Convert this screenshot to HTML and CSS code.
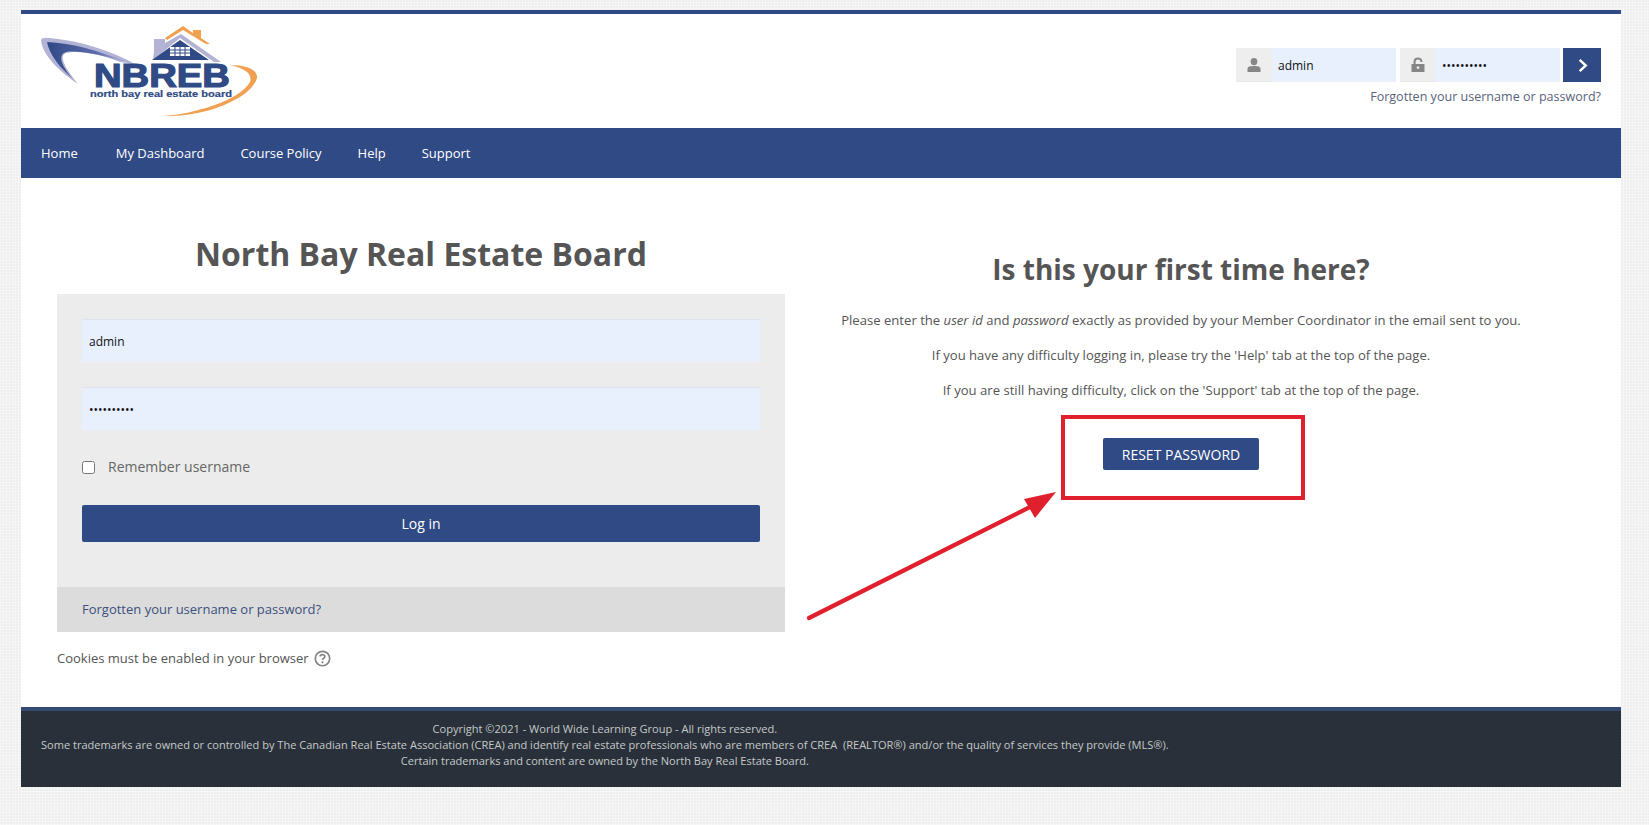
FILE: index.html
```html
<!DOCTYPE html>
<html lang="en">
  <head>
    <meta charset="UTF-8" />
    <meta name="viewport" content="width=device-width, initial-scale=1.0" />
    <title>North Bay Real Estate Board</title>
    <link rel="stylesheet" href="styles.css">
  </head>
  <body>
    <div class="page">
      <header class="site-header">
        <svg class="logo" viewBox="38 24 230 100" role="img" aria-label="NBREB logo">
          <defs>
            <linearGradient id="swoosh" x1="0" y1="0" x2="1" y2="0">
              <stop offset="0" stop-color="#2f4a87" />
              <stop offset="0.6" stop-color="#5a6aa8" />
              <stop offset="1" stop-color="#a9abd4" />
            </linearGradient>
          </defs>
          <path class="logo-lav" d="M41 40 Q42 37 50 38 C80 41 110 50 135 64 L120 62 C100 53 76 50 66 53 C58 56 66 69 78 84 C60 72 42 55 41 40Z" />
          <path fill="url(#swoosh)" d="M47 42 C72 43 100 51 126 62 C102 55 78 50 66 52 C57 55 62 66 72 78 C60 68 49 54 47 42Z" />
          <path class="logo-orange" d="M163 116 C195 114 240 100 250 82 C253 73 243 68 230 65 C247 65 258 70 257 78 C252 98 205 118 163 116Z" />
          <path class="logo-orange" d="M165 38 L183 26 L193 33 L193 30 L201 30 L201 38 L210 44 L206 44 L183 30 L167 40Z" />
          <path class="logo-lav" d="M154 52 L154 39 L165 39 L165 43 L181 34 L221 62 L214 62 L180 38 L153 60Z" />
          <path class="logo-navy" d="M180 40 L209 60 L152 60Z" />
          <path class="logo-window" d="M170 47 H190 V56 H170Z" />
          <path class="logo-grid" d="M175 47 V56 M180 47 V56 M185 47 V56 M170 50 H190 M170 53 H190" />
          <text class="logo-title" x="94" y="87" textLength="136" lengthAdjust="spacingAndGlyphs">NBREB</text>
          <text class="logo-sub" x="90" y="97" textLength="142" lengthAdjust="spacingAndGlyphs">north bay real estate board</text>
        </svg>
        <div class="top-login">
          <div class="top-fields">
            <div class="top-field">
              <span class="addon">
                <svg class="addon-icon" viewBox="0 0 16 16"><ellipse cx="8" cy="4.6" rx="3.4" ry="3.6" /><path d="M1.5 15 V12.2 C1.5 9.6 4 9 8 9 C12 9 14.5 9.6 14.5 12.2 V15Z" /></svg>
              </span>
              <input class="top-input" type="text" value="admin" aria-label="Username" />
            </div>
            <div class="top-field">
              <span class="addon">
                <svg class="addon-icon" viewBox="0 0 16 16">
                  <path class="lock-shackle" d="M4.6 7 V4.6 C4.6 0.6 11.4 0.6 11.4 4.6 V5" />
                  <path fill-rule="evenodd" d="M1.5 7 H14.5 V15 H1.5Z M8 9.2 a1.4 1.4 0 1 0 0.01 0Z" />
                </svg>
              </span>
              <input class="top-input top-pass" type="password" value="adminadmin" aria-label="Password" />
            </div>
            <button class="top-go" aria-label="Log in">
              <svg viewBox="0 0 16 16" class="go-icon"><path d="M5 2 L11.5 8 L5 14" /></svg>
            </button>
          </div>
          <a class="top-forgot" href="#">Forgotten your username or password?</a>
        </div>
      </header>

      <nav class="main-nav">
        <a href="#">Home</a>
        <a href="#">My Dashboard</a>
        <a href="#">Course Policy</a>
        <a href="#">Help</a>
        <a href="#">Support</a>
      </nav>

      <main class="content">
        <section class="login-col">
          <h1>North Bay Real Estate Board</h1>
          <div class="login-box">
            <form class="login-form">
              <input class="login-input" type="text" value="admin" aria-label="Username" />
              <input class="login-input login-pass" type="password" value="adminadmin" aria-label="Password" />
              <label class="remember"><input type="checkbox" /> <span>Remember username</span></label>
              <button class="login-btn" type="button">Log in</button>
            </form>
            <div class="login-foot"><a href="#">Forgotten your username or password?</a></div>
          </div>
          <p class="cookies">
            Cookies must be enabled in your browser
            <svg class="help-icon" viewBox="0 0 16 16">
              <circle cx="8" cy="8" r="6.8" />
              <path d="M5.8 6.2 C5.9 3.8 10.2 3.8 10.2 6.2 C10.2 7.8 8 7.6 8 9.4" />
              <circle class="help-dot" cx="8" cy="11.6" r="1" />
            </svg>
          </p>
        </section>

        <section class="info-col">
          <h2>Is this your first time here?</h2>
          <p>Please enter the <em>user id</em> and <em>password</em> exactly as provided by your Member Coordinator in the email sent to you.</p>
          <p>If you have any difficulty logging in, please try the 'Help' tab at the top of the page.</p>
          <p>If you are still having difficulty, click on the 'Support' tab at the top of the page.</p>
          <button class="reset-btn" type="button">RESET PASSWORD</button>
        </section>

        <!-- red annotation drawn over the screenshot -->
        <svg class="annotation" viewBox="0 0 560 240">
          <rect class="note-box" x="263" y="11" width="240" height="81" />
          <path class="note-line" d="M9 212 L232 100" />
          <path class="note-head" d="M256 86 L224 93 L235 112Z" />
        </svg>
      </main>

      <footer class="site-footer">
        <div class="footer-text">
          Copyright ©2021 - World Wide Learning Group - All rights reserved.<br />
          Some trademarks are owned or controlled by The Canadian Real Estate Association (CREA) and identify real estate professionals who are members of CREA&nbsp; (REALTOR®) and/or the quality of services they provide (MLS®).<br />
          Certain trademarks and content are owned by the North Bay Real Estate Board.
        </div>
      </footer>
    </div>
  </body>
</html>
```

FILE: styles.css
```css
* {
  box-sizing: border-box;
}
body {
  margin: 0;
  padding: 10px 28px 38px 21px;
  font-family: "Open Sans", sans-serif;
  font-size: 14px;
  color: #555;
  background-color: #efefef;
  background-image:
    repeating-linear-gradient(0deg, rgba(255, 255, 255, 0.35) 0 1px, transparent 1px 3px),
    repeating-linear-gradient(90deg, rgba(255, 255, 255, 0.35) 0 1px, transparent 1px 3px);
}
a {
  text-decoration: none;
}
.page {
  background-color: white;
  border-top: 4px solid #2f4a84;
}

/* header */
.site-header {
  height: 114px;
  display: flex;
  justify-content: space-between;
  padding: 10px 20px 0 17px;
}
.logo {
  width: 230px;
  height: 100px;
}
.logo-lav {
  fill: #b3b3d6;
}
.logo-orange {
  fill: #f0a050;
}
.logo-navy {
  fill: #2f4a84;
}
.logo-window {
  fill: white;
}
.logo-grid {
  stroke: #2f4a84;
  stroke-width: 1;
}
.logo-title {
  font-family: "Liberation Sans", sans-serif;
  font-weight: 700;
  font-size: 33px;
  fill: #2f4a84;
  stroke: #2f4a84;
  stroke-width: 1.2;
}
.logo-sub {
  font-family: "Liberation Sans", sans-serif;
  font-weight: 700;
  font-size: 9.5px;
  fill: #2f4a84;
  stroke: #2f4a84;
  stroke-width: 0.2;
}
.top-login {
  padding-top: 24px;
  text-align: right;
}
.top-fields {
  display: flex;
  gap: 4px;
}
.top-field {
  display: flex;
  width: 160px;
  height: 34px;
}
.addon {
  width: 36px;
  background-color: #eeeeee;
  display: flex;
  align-items: center;
  justify-content: center;
  border-bottom: 1px solid #e8e8e8;
}
.addon-icon {
  width: 16px;
  height: 16px;
  fill: #868686;
}
.lock-shackle {
  fill: none;
  stroke: #868686;
  stroke-width: 2;
}
.top-input {
  flex: 1;
  min-width: 0;
  border: none;
  border-bottom: 1px solid #eef1f6;
  background-color: #e8f0fe;
  padding: 2px 6px 0;
  font-family: "Open Sans", sans-serif;
  font-size: 12px;
  color: #111;
  outline: none;
}
.top-go {
  width: 38px;
  height: 34px;
  margin-left: -1px;
  border: none;
  background-color: #2f4a84;
  display: flex;
  align-items: center;
  justify-content: center;
  padding: 0;
}
.go-icon {
  width: 15px;
  height: 15px;
  fill: none;
  stroke: white;
  stroke-width: 2.6;
}
.top-forgot {
  display: block;
  margin-top: 5px;
  font-size: 12.55px;
  line-height: 20px;
  color: #59647a;
}

/* nav */
.main-nav {
  height: 50px;
  background-color: #2f4a84;
  display: flex;
  align-items: center;
  padding-left: 20px;
  gap: 36px;
}
.main-nav a {
  color: white;
  font-size: 13px;
}
.main-nav a:first-child {
  margin-right: 2px;
}

/* content */
.content {
  position: relative;
  height: 529px;
  display: flex;
  padding: 0 44px 0 36px;
}
.login-col {
  width: 728px;
  flex: none;
  padding-top: 54px;
}
h1 {
  margin: 0 0 18px;
  text-align: center;
  font-size: 32px;
  line-height: 44px;
  font-weight: 700;
  color: #555;
}
.login-box {
  background-color: #ececec;
}
.login-form {
  height: 293px;
  padding: 25px 25px 0;
  display: flex;
  flex-direction: column;
}
.login-input {
  height: 43px;
  width: 100%;
  flex: none;
  border: none;
  border-top: 1px solid #dde3ec;
  background-color: #e8f0fe;
  padding: 0 7px;
  font-family: "Open Sans", sans-serif;
  font-size: 12px;
  color: #111;
  outline: none;
}
.login-pass {
  margin-top: 25px;
}
.remember {
  margin-top: 24px;
  display: flex;
  align-items: center;
  gap: 13px;
  font-size: 14px;
  line-height: 26px;
  color: #666;
}
.remember input {
  margin: 0;
  width: 13px;
  height: 13px;
}
.login-btn {
  margin-top: 25px;
  height: 37px;
  width: 100%;
  flex: none;
  border: none;
  border-radius: 2px;
  background-color: #2f4a84;
  color: white;
  font-family: "Open Sans", sans-serif;
  font-size: 14px;
}
.login-foot {
  height: 45px;
  background-color: #dcdcdc;
  padding-left: 25px;
  line-height: 45px;
  font-size: 13px;
}
.login-foot a {
  color: #3d4f7c;
}
.cookies {
  margin: 16px 0 0;
  font-size: 13px;
  line-height: 20px;
  color: #555;
  display: flex;
  align-items: center;
  gap: 5px;
}
.help-icon {
  width: 17px;
  height: 17px;
  fill: none;
  stroke: #858585;
  stroke-width: 1.6;
}
.help-dot {
  fill: #858585;
  stroke: none;
}
.info-col {
  flex: 1;
  padding-top: 72px;
  text-align: center;
}
h2 {
  margin: 0 0 23px;
  font-size: 28px;
  line-height: 38px;
  font-weight: 700;
  color: #555;
}
.info-col p {
  margin: 0 0 17px;
  font-size: 13.1px;
  line-height: 18px;
  color: #555;
}
.reset-btn {
  margin-top: 22px;
  width: 156px;
  height: 32px;
  border: none;
  border-radius: 2px;
  background-color: #2f4a84;
  color: white;
  font-family: "Open Sans", sans-serif;
  font-size: 14px;
}
.annotation {
  position: absolute;
  left: 779px;
  top: 228px;
  width: 560px;
  height: 240px;
}
.note-box {
  fill: none;
  stroke: #e0202c;
  stroke-width: 4;
}
.note-line {
  fill: none;
  stroke: #e0202c;
  stroke-width: 4.2;
  stroke-linecap: round;
}
.note-head {
  fill: #e0202c;
}

/* footer */
.site-footer {
  height: 80px;
  background-color: #2a303a;
  border-top: 4px solid #354a73;
  padding: 10px 0 0 20px;
}
.footer-text {
  display: inline-block;
  text-align: center;
  font-size: 11.05px;
  line-height: 16px;
  color: #c3c9c9;
}
```
